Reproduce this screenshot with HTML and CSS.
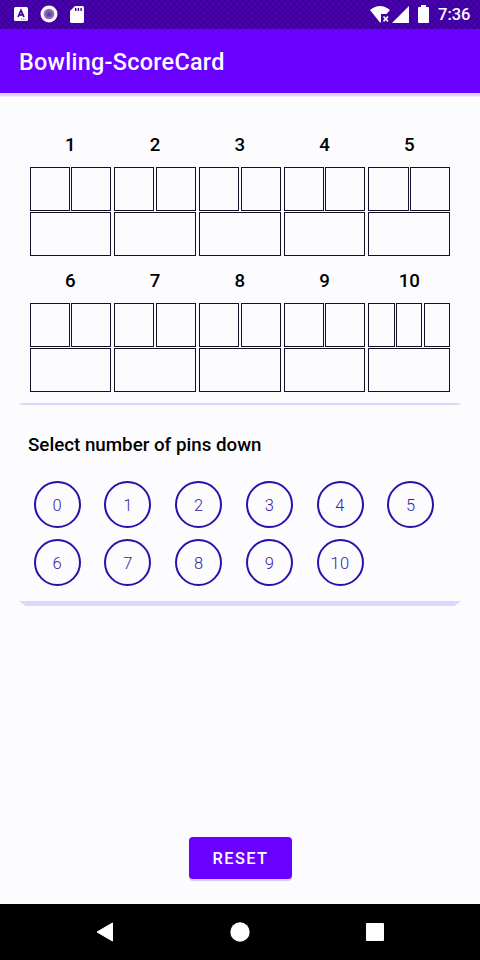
FILE: index.html
```
<!DOCTYPE html>
<html lang="en">
<head>
<meta charset="utf-8">
<title>Bowling-ScoreCard</title>
<link rel="stylesheet" href="styles.css">
</head>
<body>
<div class="status">
  <div class="status-left">
    <svg width="14" height="14" viewBox="0 0 14 14"><rect width="14" height="14" rx="1.5" fill="#fdfcff"/><path d="M4 10 7 3.4 10 10M5.1 7.8h3.8" fill="none" stroke="#43009c" stroke-width="1.7"/><path d="M7 12.2h5" stroke="#8a6bc8" stroke-dasharray="1 .8"/></svg>
    <svg width="18" height="18" viewBox="0 0 18 18"><circle cx="9" cy="9" r="8.5" fill="#fdfcff"/><circle cx="9" cy="9" r="5.3" fill="#8d6cb8"/><circle cx="9" cy="9" r="3.2" fill="#7656b0"/><path d="M6.7 10.5 9 7.5l2.3 3z" fill="#5432a0"/></svg>
    <svg width="14" height="17" viewBox="0 0 14 17"><path d="M5 0h7.500Q14 0 14 1.500v14q0 1.500-1.500 1.500h-11Q0 17 0 15.500V5z" fill="#fdfcff"/><path d="M5.700 2v3M8.400 2v3M11.100 2v3" stroke="#43009c" stroke-width="1.4"/></svg>
  </div>
  <div class="status-right">
    <svg class="wifi" width="21" height="17" viewBox="0 0 21 17"><path d="M0 4Q10 -4 20 4L16.500 8H11v8.500L10 16.500z" fill="#fdfcff"/><path d="m13.500 10.500 4.500 4.800m0-4.800-4.500 4.800" stroke="#fdfcff" stroke-width="1.700"/></svg>
    <svg class="signal" width="17" height="17" viewBox="0 0 17 17"><path d="M17 0v17H0z" fill="#fdfcff"/></svg>
    <svg class="battery" width="11" height="18" viewBox="0 0 11 18"><path d="M3 0h5v2h2q1 0 1 1v14q0 1-1 1H1q-1 0-1-1V3q0-1 1-1h2z" fill="#fdfcff"/></svg>
    <span class="time">7:36</span>
  </div>
</div>
<header class="appbar"><h1>Bowling-ScoreCard</h1></header>
<main>
  <section class="card scores">
    <div class="frame"><b>1</b><div class="balls"><i></i><i></i></div><div class="total"></div></div>
    <div class="frame"><b>2</b><div class="balls"><i></i><i></i></div><div class="total"></div></div>
    <div class="frame"><b>3</b><div class="balls"><i></i><i></i></div><div class="total"></div></div>
    <div class="frame"><b>4</b><div class="balls"><i></i><i></i></div><div class="total"></div></div>
    <div class="frame"><b>5</b><div class="balls"><i></i><i></i></div><div class="total"></div></div>
    <div class="frame"><b>6</b><div class="balls"><i></i><i></i></div><div class="total"></div></div>
    <div class="frame"><b>7</b><div class="balls"><i></i><i></i></div><div class="total"></div></div>
    <div class="frame"><b>8</b><div class="balls"><i></i><i></i></div><div class="total"></div></div>
    <div class="frame"><b>9</b><div class="balls"><i></i><i></i></div><div class="total"></div></div>
    <div class="frame"><b>10</b><div class="balls"><i></i><i></i><i></i></div><div class="total"></div></div>
  </section>
  <div class="edge thin"></div>
  <section class="card pins">
    <h2>Select number of pins down</h2>
    <div class="pin-grid">
      <button>0</button><button>1</button><button>2</button><button>3</button><button>4</button><button>5</button>
      <button>6</button><button>7</button><button>8</button><button>9</button><button>10</button>
    </div>
  </section>
  <div class="edge thick"></div>
  <button class="reset">RESET</button>
</main>
<nav>
  <svg width="18" height="20" viewBox="0 0 18 20"><path d="M16.500 1v18L1 10z" fill="#fdfcff" stroke="#fdfcff" stroke-linejoin="round"/></svg>
  <svg width="20" height="20" viewBox="0 0 20 20"><circle cx="10" cy="10" r="9.700" fill="#fdfcff"/></svg>
  <svg width="18" height="18" viewBox="0 0 18 18"><rect width="18" height="18" rx="1" fill="#fdfcff"/></svg>
</nav>
</body>
</html>
```
FILE: styles.css
```
* { box-sizing: border-box; }
body {
  margin: 0;
  width: 480px;
  height: 960px;
  display: flex;
  flex-direction: column;
  background: #fcfcff;
  font-family: Roboto, "Liberation Sans", sans-serif;
  color: #000;
  overflow: hidden;
}
svg { display: block; flex: none; }
h1, h2 { margin: 0; font-weight: 500; }
button { padding: 0; margin: 0; font-family: inherit; }

.status {
  height: 29px;
  flex: none;
  display: flex;
  justify-content: space-between;
  background:
    repeating-linear-gradient(45deg, rgba(30, 0, 130, .45) 0 1px, transparent 1px 4.243px),
    repeating-linear-gradient(-45deg, rgba(30, 0, 130, .45) 0 1px, transparent 1px 4.243px),
    #4a00aa;
}
.status-left {
  display: flex;
  align-items: center;
  gap: 12px;
  padding-left: 14px;
  height: 28px;
}
.status-right {
  display: flex;
  align-items: center;
  height: 28px;
  padding-right: 10px;
}
.signal { margin-left: 1px; }
.battery { margin-left: 9px; }
.time {
  margin-left: 9px;
  width: 32px;
  font-size: 16.5px;
  font-weight: 500;
  line-height: 28px;
  padding-top: 2px;
  color: #fdfcff;
  white-space: nowrap;
}

.appbar {
  height: 64px;
  flex: none;
  display: flex;
  align-items: center;
  padding: 2px 0 0 19px;
  background: #6a00ff;
  box-shadow: 0 3px 0 #d7d5ff, 0 4px 0 #f6e6ff;
}
.appbar h1 {
  font-size: 23.4px;
  letter-spacing: .28px;
  color: #fdfcff;
}

main {
  flex: 1;
  display: flex;
  flex-direction: column;
}
.scores {
  display: grid;
  grid-template-columns: repeat(5, 81.7px);
  column-gap: 3.05px;
  row-gap: 10px;
  padding: 37px 0 0 29.5px;
}
.frame {
  height: 126px;
  display: flex;
  flex-direction: column;
}
.frame b {
  height: 37px;
  line-height: 31px;
  text-align: center;
  font-size: 18.7px;
  font-weight: 500;
}
.balls {
  height: 44px;
  display: flex;
  gap: 1.5px;
  margin-bottom: 1px;
}
.balls i { flex: 1; border: 1px solid #11112a; }
.total { height: 44px; border: 1px solid #11112a; }

.edge {
  margin: 0 19px;
  background: #d9d7ff;
}
.thin {
  height: 2px;
  margin-top: 11px;
  clip-path: polygon(0 0, 100% 0, 99.5% 100%, .5% 100%);
}
.thick {
  height: 5px;
  margin-top: 14px;
  clip-path: polygon(0 0, 100% 0, 98.5% 100%, 1.5% 100%);
}
.pins h2 {
  padding: 28px 0 0 28px;
  height: 75.5px;
  font-size: 18.75px;
  line-height: 24px;
}
.pin-grid {
  display: grid;
  grid-template-columns: repeat(6, 47px);
  column-gap: 23.7px;
  row-gap: 11.500px;
  padding: 0 0 1px 33.8px;
}
.pin-grid button {
  height: 47px;
  border: 2px solid #2a10ac;
  border-radius: 50%;
  background: transparent;
  color: #3c20a4;
  font-size: 16.5px;
  font-weight: 300;
  letter-spacing: .3px;
  padding-top: 2px;
}
.reset {
  align-self: center;
  width: 103px;
  height: 42px;
  margin: auto 0 25.500px;
  padding: 1px 0 0 1px;
  border: 0;
  border-radius: 4px;
  background: #6a00ff;
  color: #fdfcff;
  font-size: 16.4px;
  font-weight: 500;
  letter-spacing: 1.4px;
  box-shadow: 0 2px 1px #d2cfe6;
}
nav {
  height: 56px;
  flex: none;
  display: flex;
  align-items: center;
  justify-content: space-between;
  padding: 0 96px;
  background: #000;
}
```
